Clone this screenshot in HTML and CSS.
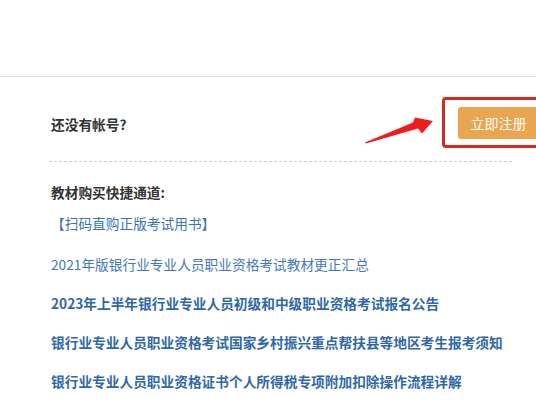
FILE: index.html
```html
<!DOCTYPE html>
<html lang="zh-CN">
<head>
<meta charset="utf-8">
<title>注册</title>
<link rel="stylesheet" href="styles.css">
</head>
<body>
<div class="page">
  <div class="header"></div>
  <div class="main">
    <div class="signup">
      <span class="signup-text">还没有帐号?</span>
      <a class="btn-register" href="#">立即注册</a>
    </div>
    <div class="divider"></div>
    <div class="shortcut">
      <div class="shortcut-title">教材购买快捷通道:</div>
      <a class="shortcut-link" href="#">【扫码直购正版考试用书】</a>
    </div>
    <ul class="articles">
      <li><a class="article normal" href="#">2021年版银行业专业人员职业资格考试教材更正汇总</a></li>
      <li><a class="article" href="#">2023年上半年银行业专业人员初级和中级职业资格考试报名公告</a></li>
      <li><a class="article" href="#">银行业专业人员职业资格考试国家乡村振兴重点帮扶县等地区考生报考须知</a></li>
      <li><a class="article" href="#">银行业专业人员职业资格证书个人所得税专项附加扣除操作流程详解</a></li>
    </ul>
  </div>
  <div class="mark-box"></div>
  <svg class="mark-arrow" width="536" height="402" viewBox="0 0 536 402">
    <polygon points="365,142.5 413,122.5 415,117.5 433,121 422,133.5 418,128.5 366,143.5" fill="#ee1c1c"/>
  </svg>
</div>
</body>
</html>
```
FILE: styles.css
```css
html, body {
  margin: 0;
  padding: 0;
  background: #fff;
  overflow: hidden;
}
.page {
  position: relative;
  width: 536px;
  height: 402px;
  overflow: hidden;
  font-family: "Noto Sans CJK SC", "Microsoft YaHei", sans-serif;
  font-size: 13.7px;
  color: #333;
}
.header {
  height: 76px;
  border-bottom: 1px solid #dedede;
}
.main {
  padding: 0 24px 0 51px;
}
.signup {
  margin-top: 30px;
  height: 32px;
  display: flex;
  align-items: center;
  margin-right: -24px;
}
.signup-text {
  font-weight: bold;
  line-height: 20px;
  margin-top: 2px;
}
.btn-register {
  margin-left: auto;
  width: 81px;
  height: 32px;
  line-height: 32px;
  box-sizing: border-box;
  text-align: center;
  background: #e9a550;
  color: #fff;
  border-radius: 3px;
  text-decoration: none;
  font-size: 14px;
  margin-right: -3px;
}
.divider {
  margin-top: 22px;
  border-top: 1px dashed #cfcfcf;
  margin-left: -2px;
}
.shortcut {
  margin-top: 20px;
  display: flex;
  flex-direction: column;
  gap: 11px;
}
.shortcut-title {
  font-weight: bold;
  line-height: 20px;
}
.shortcut-link {
  line-height: 20px;
  color: #3c73b3;
  text-decoration: none;
}
.articles {
  list-style: none;
  margin: 21px 0 0;
  padding: 0;
  display: flex;
  flex-direction: column;
  gap: 19px;
}
.article {
  display: block;
  line-height: 20px;
  color: #2f68a8;
  font-weight: bold;
  text-decoration: none;
  white-space: nowrap;
}
.article.normal {
  font-weight: normal;
  color: #4479b8;
}
.mark-box {
  position: absolute;
  left: 442px;
  top: 97px;
  width: 110px;
  height: 51px;
  box-sizing: border-box;
  border: 3px solid #d8271f;
  border-radius: 4px;
}
.mark-arrow {
  position: absolute;
  left: 0;
  top: 0;
  pointer-events: none;
}
```
